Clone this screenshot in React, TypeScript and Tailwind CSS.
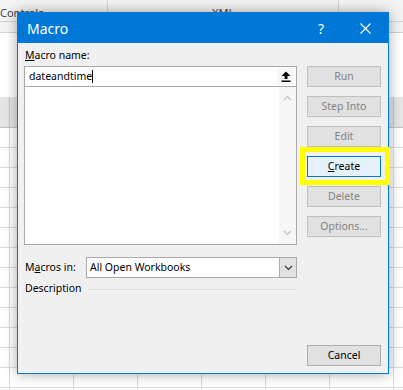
import React from "react";

const gridRows = Array.from({ length: 14 });
const gridCols = Array.from({ length: 6 });

function Sheet() {
  return (
    <div className="w-[403px] h-[390px] overflow-hidden bg-white font-['Noto_Sans',sans-serif]">
      <div className="flex h-[22px] bg-[#f3f3f3] border-b border-[#d4d4d4] text-[11px] text-[#444]">
        <div className="w-[108px] border-r border-[#d4d4d4] pt-[6px] leading-[14px]">Controls</div>
        <div className="w-[231px] border-r border-[#d4d4d4] pt-[6px] pl-[104px] leading-[14px]">XML</div>
        <div className="flex-1" />
      </div>
      <div className="h-[11px] bg-[#f3f3f3] border-b border-[#d4d4d4]" />
      <div className="h-[64px] bg-white" />
      <div className="flex h-[31px] bg-[#e6e6e6] border-b border-[#c4c4c4]">
        <div className="w-[10px] shrink-0 border-r border-[#c4c4c4]" />
        {gridCols.map((_, i) => (
          <div key={i} className="w-[64px] shrink-0 border-r border-[#c4c4c4]" />
        ))}
      </div>
      {gridRows.map((_, r) => (
        <div key={r} className="flex h-[20px] border-b border-[#dadada]">
          <div className="w-[10px] shrink-0 border-r border-[#dadada]" />
          {gridCols.map((_, i) => (
            <div key={i} className="w-[64px] shrink-0 border-r border-[#dadada]" />
          ))}
        </div>
      ))}
    </div>
  );
}

function Btn({ label, disabled, children }: { label?: string; disabled?: boolean; children?: React.ReactNode }) {
  return (
    <div
      className={
        disabled
          ? "h-[21px] flex items-center justify-center bg-[#e1e1e1] border border-[#bfbfbf] text-[#838383]"
          : "h-[21px] flex items-center justify-center bg-[#e1e1e1] border border-[#adadad] text-black"
      }
    >
      {children ?? label}
    </div>
  );
}

function Chevron({ up, color }: { up?: boolean; color: string }) {
  return (
    <svg width="9" height="6" viewBox="0 0 9 6">
      <path d={up ? "M1 5 L4.5 1.5 L8 5" : "M1 1 L4.5 4.5 L8 1"} fill="none" stroke={color} strokeWidth="1.2" />
    </svg>
  );
}

export default function App() {
  return (
    <div className="relative w-[403px] h-[390px] overflow-hidden">
      <Sheet />

      <div className="absolute left-[17px] top-[12px] w-[372px] h-[362px] flex flex-col bg-[#f0f0f0] border border-[#0078d7] shadow-[0_0_12px_rgba(0,0,0,0.35)] font-['Noto_Sans',sans-serif] text-[10.5px] text-black">
        {/* title bar */}
        <div className="h-[30px] shrink-0 flex items-center bg-[#0078d7] text-white pl-[9px] pr-[17px]">
          <span className="text-[14px]">Macro</span>
          <span className="ml-auto text-[14px]">?</span>
          <svg className="ml-[36px]" width="11" height="11" viewBox="0 0 11 11">
            <path d="M0.5 0.5 L10.5 10.5 M10.5 0.5 L0.5 10.5" stroke="white" strokeWidth="1.1" />
          </svg>
        </div>

        <div className="flex-1 flex gap-[10px] pl-[6px] pr-[7px] pb-[7px]">
          {/* left column */}
          <div className="w-[273px] flex flex-col">
            <div className="mt-[4px] h-[16px] leading-[16px] pl-[1px]">
              <span className="underline">M</span>acro name:
            </div>
            <div className="mt-[3px] h-[21px] flex items-center bg-white border border-[#a9a9a9] pl-[4px]">
              <span>dateandtime</span>
              <span className="w-px h-[13px] bg-black" />
              <div className="ml-auto mr-[1px] w-[18px] h-[17px] flex items-center justify-center bg-[#f7f7f7]">
                <svg width="10" height="11" viewBox="0 0 10 11">
                  <path d="M5 0.5 L9.5 5 L6.5 5 L6.5 8 L3.5 8 L3.5 5 L0.5 5 Z" fill="black" />
                  <rect x="0.5" y="9.5" width="9" height="1.5" fill="black" />
                </svg>
              </div>
            </div>
            <div className="h-[158px] flex bg-white border-x border-b border-[#a9a9a9]">
              <div className="flex-1" />
              <div className="w-[17px] flex flex-col items-center justify-between py-[8px] bg-[#f6f6f6]">
                <Chevron up color="#c2c2c2" />
                <Chevron color="#c2c2c2" />
              </div>
            </div>

            <div className="mt-[12px] h-[21px] flex items-center">
              <div className="w-[62px] pl-[1px]">
                M<span className="underline">a</span>cros in:
              </div>
              <div className="w-[211px] h-[21px] flex items-center bg-white border border-[#a9a9a9] pl-[3px]">
                <span>All Open Workbooks</span>
                <div className="ml-auto w-[17px] h-full flex items-center justify-center bg-[#e1e1e1] border-l border-[#adadad]">
                  <Chevron color="#333" />
                </div>
              </div>
            </div>

            <div className="mt-[3px] h-[16px] flex items-center pl-[1px]">
              <span>Description</span>
              <div className="flex-1 h-px ml-[6px] bg-[#dcdcdc]" />
            </div>
          </div>

          {/* right column */}
          <div className="w-[74px] flex flex-col gap-[9px] pt-[23px]">
            <Btn label="Run" disabled />
            <Btn label="Step Into" disabled />
            <Btn label="Edit" disabled />
            <div className="relative">
              <div className="h-[21px] flex items-center justify-center bg-[#e5f1fb] border border-[#0078d7]">
                <span>
                  <span className="underline">C</span>reate
                </span>
              </div>
              <div className="absolute -left-[7px] -right-[9px] -top-[9px] -bottom-[8px] border-[5px] border-[#ffff00]" />
            </div>
            <Btn label="Delete" disabled />
            <Btn label="Options..." disabled />
            <div className="mt-auto">
              <Btn label="Cancel" />
            </div>
          </div>
        </div>
      </div>
    </div>
  );
}
